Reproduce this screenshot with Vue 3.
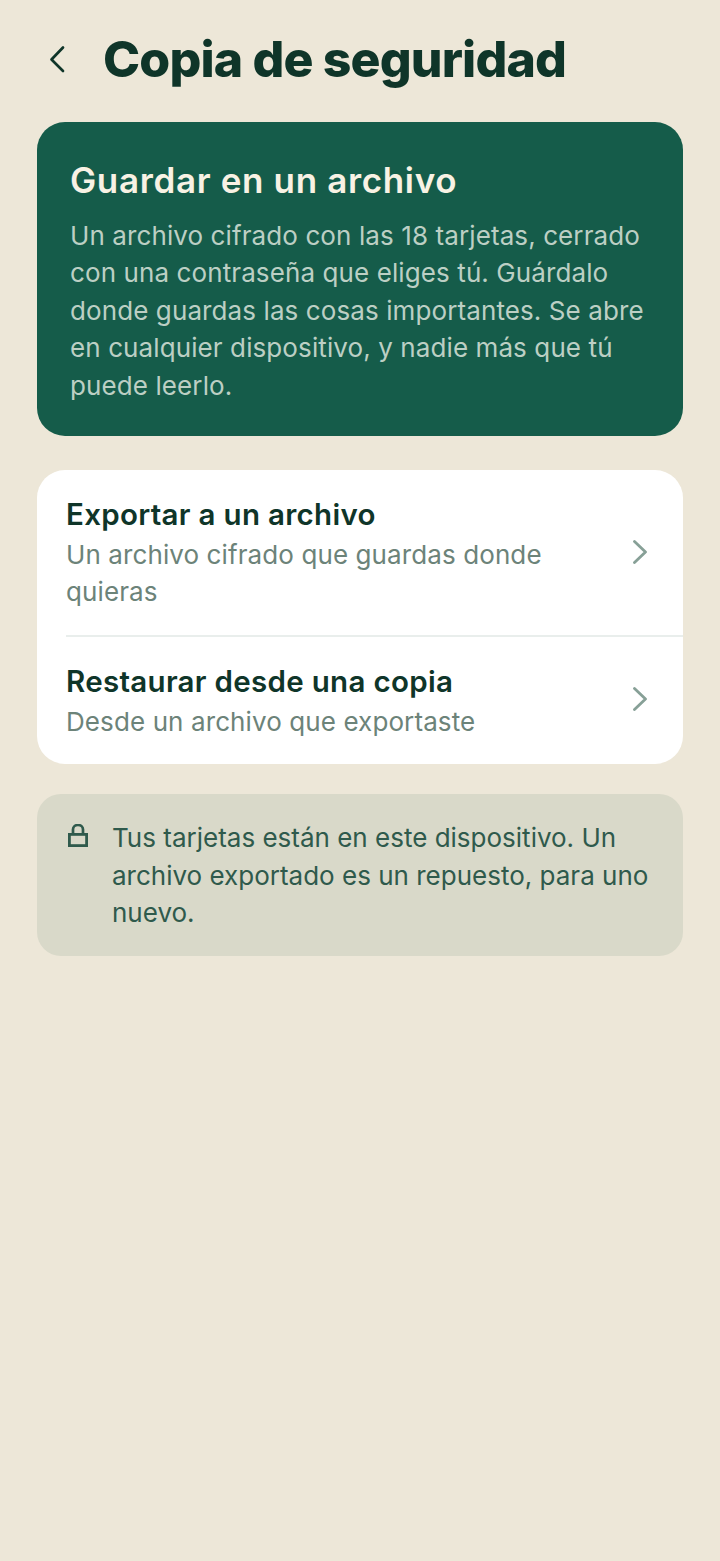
<template>
  <div class="screen">
    <header class="top">
      <button class="back" aria-label="Volver">
        <svg width="24" height="30" viewBox="0 0 24 30" fill="none">
          <path d="M18 3.5 6.5 15.5 18 27" stroke="#0f3529" stroke-width="2.7" stroke-linecap="round" stroke-linejoin="round" />
        </svg>
      </button>
      <h1>Copia de seguridad</h1>
    </header>

    <section class="hero">
      <h2>Guardar en un archivo</h2>
      <p>Un archivo cifrado con las 18 tarjetas, cerrado<br>con una contraseña que eliges tú. Guárdalo<br>donde guardas las cosas importantes. Se abre<br>en cualquier dispositivo, y nadie más que tú<br>puede leerlo.</p>
    </section>

    <section class="list">
      <div v-for="row in rows" :key="row.title" class="row">
        <div class="row-text">
          <h3>{{ row.title }}</h3>
          <p v-html="row.sub"></p>
        </div>
        <svg class="chev" width="16" height="24" viewBox="0 0 16 24" fill="none">
          <path d="M2.5 1.5 13.5 12 2.5 22.5" stroke="#87a097" stroke-width="2.8" stroke-linecap="round" stroke-linejoin="round" />
        </svg>
      </div>
    </section>

    <section class="note">
      <svg class="lock" width="20" height="24" viewBox="0 0 20 24" fill="none">
        <path d="M5 11V5.5a5 4.5 0 0 1 10 0V11" stroke="#2f5a4c" stroke-width="2.7" />
        <rect x="1.4" y="10.4" width="17.2" height="11.2" stroke="#2f5a4c" stroke-width="2.8" />
      </svg>
      <p>Tus tarjetas están en este dispositivo. Un<br>archivo exportado es un repuesto, para uno<br>nuevo.</p>
    </section>
  </div>
</template>

<script setup>
const rows = [
  { title: 'Exportar a un archivo', sub: 'Un archivo cifrado que guardas donde<br>quieras' },
  { title: 'Restaurar desde una copia', sub: 'Desde un archivo que exportaste' },
];
</script>

<style>
html, body {
  background: #ede7d8;
}
</style>

<style scoped>
.screen {
  min-height: 1561px;
  box-sizing: border-box;
  padding: 0 37px;
  background: #ede7d8;
  font-family: Inter, "Noto Sans", sans-serif;
}

.top {
  height: 122px;
  display: flex;
  align-items: center;
  gap: 32px;
}

.back {
  width: 34px;
  height: 40px;
  padding: 0 0 0 8px;
  margin-top: -4px;
  border: 0;
  background: none;
  display: flex;
  align-items: center;
}

.top h1 {
  margin: -5px 0 0;
  font-size: 50px;
  line-height: 60px;
  font-weight: 800;
  letter-spacing: -0.85px;
  color: #0f3529;
  white-space: nowrap;
}

.hero {
  height: 314px;
  box-sizing: border-box;
  padding: 36px 33px 0;
  border-radius: 28px;
  background: #155c4a;
}

.hero h2 {
  margin: 0 0 14.5px;
  font-size: 35px;
  line-height: 44px;
  font-weight: 600;
  letter-spacing: 0.65px;
  color: #f8f2e4;
}

.hero p {
  margin: 0;
  font-size: 26px;
  line-height: 37.5px;
  letter-spacing: 0.1px;
  color: #bccfc4;
  white-space: nowrap;
}

.list {
  margin-top: 34px;
  border-radius: 28px;
  background: #fff;
  overflow: hidden;
}

.row {
  display: flex;
  align-items: center;
  justify-content: space-between;
  padding: 26px 35px 25px 29px;
}

.row + .row {
  border-top: 2px solid #e9eeec;
  margin-left: 29px;
  padding-left: 0;
  padding-bottom: 24px;
}

.row-text h3 {
  margin: 0;
  font-size: 29.5px;
  line-height: 37px;
  font-weight: 600;
  letter-spacing: 0.3px;
  color: #0f3529;
}

.row-text p {
  margin: 3px 0 0;
  font-size: 26px;
  line-height: 37px;
  letter-spacing: 0.1px;
  color: #6c8379;
  white-space: nowrap;
}

.chev {
  margin-bottom: 2px;
}

.row + .row .chev {
  margin-bottom: 5px;
}

.note {
  margin-top: 30px;
  height: 162px;
  box-sizing: border-box;
  padding: 25px 27px 0 31px;
  display: flex;
  gap: 24px;
  border-radius: 24px;
  background: #d9d9c9;
}

.lock {
  flex: none;
  margin-top: 5px;
}

.note p {
  margin: 0;
  font-size: 26px;
  line-height: 37.5px;
  color: #2f5a4c;
  white-space: nowrap;
}
</style>
